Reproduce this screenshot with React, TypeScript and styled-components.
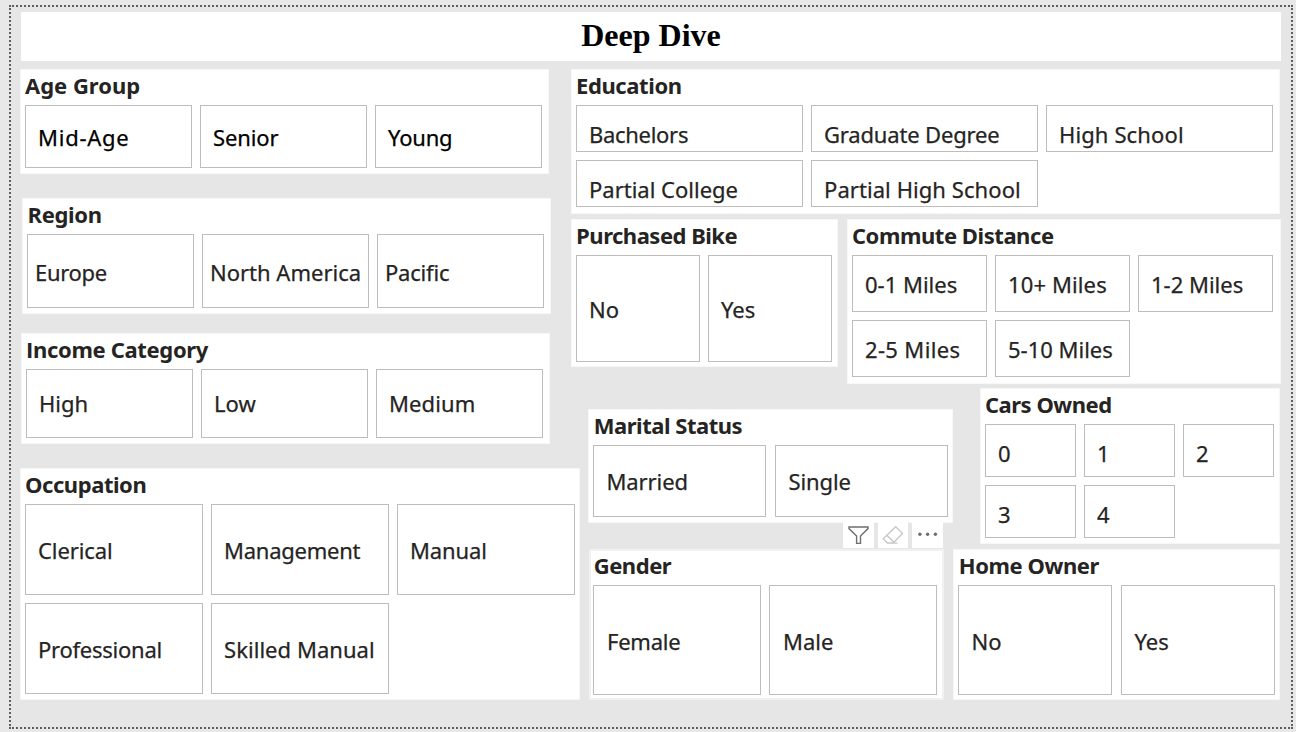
import React from "react";
import styled, { createGlobalStyle } from "styled-components";

const GlobalStyle = createGlobalStyle`
  * { box-sizing: border-box; }
  body { margin: 0; background: #e6e6e6; }
`;

const Workspace = styled.div`
  width: 1296px;
  height: 732px;
  padding: 5px 3px 3px 9px;
  overflow: hidden;
  background: #e8e8e8;
  font-family: "Noto Sans", "Open Sans", sans-serif;
  color: #252423;
`;

const Page = styled.main`
  height: 724px;
  padding: 5px 0 0 8px;
  border: 2px dotted #605e5c;
  background: #e6e6e6;
`;

const Header = styled.header`
  display: flex;
  align-items: center;
  justify-content: center;
  width: 1260px;
  height: 49px;
  margin-left: 2px;
  padding-bottom: 3px;
  background: #fff;
`;

const PageTitle = styled.h1`
  margin: 0;
  font: bold 32px/36px "Liberation Serif", serif;
  color: #000;
`;

const Body = styled.div`
  display: flex;
  margin-top: 8px;
`;

const LeftColumn = styled.div`
  width: 552px;
  flex: none;
`;

const RightColumn = styled.div`
  flex: none;
  width: 710px;
`;

const Row = styled.div<{ $top?: number; $left?: number }>`
  display: flex;
  align-items: flex-start;
  margin: ${(p) => p.$top ?? 0}px 0 0 ${(p) => p.$left ?? 0}px;
`;

const Card = styled.section<{ $w: number; $h: number; $mt: number; $ml: number; $padX: number; $hover?: boolean }>`
  position: relative;
  flex: none;
  width: ${(p) => p.$w}px;
  height: ${(p) => p.$h}px;
  margin: ${(p) => p.$mt}px 0 0 ${(p) => p.$ml}px;
  padding: 0 0 0 ${(p) => p.$padX}px;
  background: #fff;
  box-shadow: inset 0 0 0 ${(p) => (p.$hover ? 2 : 1)}px ${(p) => (p.$hover ? "#f1f1f1" : "#f7f7f7")};
`;

const CardTitle = styled.h2<{ $track: number; $indent: number }>`
  height: 36px;
  margin: 0;
  padding-left: ${(p) => p.$indent}px;
  font-size: 22px;
  line-height: 32px;
  font-weight: 700;
  letter-spacing: ${(p) => p.$track}px;
  white-space: nowrap;

  &::first-letter { font-family: "Open Sans", sans-serif; }
`;

const Tiles = styled.div<{ $tw: number; $th: number; $gap: number; $colGap: number }>`
  display: grid;
  grid-template-columns: repeat(3, ${(p) => p.$tw}px);
  grid-auto-rows: ${(p) => p.$th}px;
  gap: ${(p) => p.$gap}px ${(p) => p.$colGap}px;
`;

const Tile = styled.button<{ $inset: number; $drop: number; $track: number; $dark?: boolean }>`
  display: flex;
  align-items: center;
  padding: ${(p) => Math.max(p.$drop, 0)}px 0 ${(p) => Math.max(-p.$drop, 0)}px ${(p) => p.$inset}px;
  border: 1px solid #bfbdbb;
  background: #fff;
  color: ${(p) => (p.$dark ? "#000" : "#252423")};
  font: 400 22px/30px "Noto Sans", "Open Sans", sans-serif;
  letter-spacing: ${(p) => p.$track}px;
  -webkit-text-stroke: 0.25px currentColor;
  white-space: nowrap;
`;

const VisualActions = styled.div`
  position: absolute;
  right: 1px;
  bottom: 100%;
  display: flex;
  gap: 4px;
  padding-bottom: 1px;
`;

const Action = styled.button<{ $w?: number }>`
  width: ${(p) => p.$w ?? 31}px;
  height: 26px;
  padding: 0;
  border: 0;
  background: #fff;
  overflow: hidden;

  svg { display: block; }
`;

type Item = string | [string, number];

interface SlicerProps {
  title: string;
  titleTrack?: number;
  titleIndent?: number;
  items: Item[];
  w: number;
  h: number;
  mt?: number;
  ml?: number;
  padX?: number;
  tw: number;
  th: number;
  gap?: number;
  colGap?: number;
  inset?: number;
  drop?: number;
  dark?: boolean;
  hover?: boolean;
  children?: React.ReactNode;
}

function Slicer({
  title, titleTrack = 0, titleIndent = 0, items, w, h, mt = 0, ml = 0, padX = 5, tw, th, gap = 8, colGap = 8,
  inset = 12, drop = 1, dark, hover, children,
}: SlicerProps) {
  return (
    <Card $w={w} $h={h} $mt={mt} $ml={ml} $padX={padX} $hover={hover}>
      {children}
      <CardTitle $track={titleTrack} $indent={titleIndent}>{title}</CardTitle>
      <Tiles $tw={tw} $th={th} $gap={gap} $colGap={colGap}>
        {items.map((item) => {
          const [label, track] = typeof item === "string" ? [item, 0] : item;
          return (
            <Tile key={label} $inset={inset} $drop={drop} $track={track} $dark={dark}>
              {label}
            </Tile>
          );
        })}
      </Tiles>
    </Card>
  );
}

function FilterIcon() {
  return (
    <svg width="31" height="26" viewBox="0 0 31 26" fill="none" stroke="#706e6c" strokeWidth="1.4">
      <path d="M6 5H25V6.6L17.5 14V21.4H13.6V14L6 6.6Z" />
    </svg>
  );
}

function EraserIcon() {
  return (
    <svg width="31" height="26" viewBox="0 0 31 26" fill="none" stroke="#c8c6c4" strokeWidth="1.3">
      <path d="M17.7 4.7L24.5 11.5L15.1 21H9.5L5.2 16.8ZM8.8 13.2L15.8 20.2M9.5 21.2H19.5" />
    </svg>
  );
}

function MoreIcon() {
  return (
    <svg width="31" height="26" viewBox="0 0 31 26" fill="#706e6c">
      <circle cx="7.9" cy="12.2" r="1.7" />
      <circle cx="15.6" cy="12.2" r="1.7" />
      <circle cx="23.4" cy="12.2" r="1.7" />
    </svg>
  );
}

export default function App() {
  return (
    <Workspace>
      <GlobalStyle />
      <Page>
        <Header>
          <PageTitle>Deep Dive</PageTitle>
        </Header>
        <Body>
          <LeftColumn>
            <Slicer
              title="Age Group" titleTrack={0}
              items={[["Mid-Age", 0.75], ["Senior", -0.1], ["Young", -0.2]]}
              w={529} h={105} ml={1} tw={167} th={63} dark
            />
            <Slicer
              title="Region" titleTrack={-0.35} titleIndent={0.6}
              items={[["Europe", -0.3], "North America", ["Pacific", -0.2]]}
              w={529} h={116} mt={24} ml={3} tw={167} th={74} inset={7}
            />
            <Slicer
              title="Income Category" titleTrack={-0.33}
              items={["High", "Low", ["Medium", 0.1]]}
              w={529} h={111} mt={19} ml={2} tw={167} th={69} drop={-1}
            />
            <Slicer
              title="Occupation" titleTrack={-0.45}
              items={[["Clerical", -0.1], ["Management", -0.25], ["Manual", -0.1], ["Professional", -0.25], ["Skilled Manual", 0.05]]}
              w={560} h={232} mt={24} ml={1} tw={178} th={91}
            />
          </LeftColumn>
          <RightColumn>
            <Slicer
              title="Education" titleTrack={-0.4}
              items={[["Bachelors", -0.3], ["Graduate Degree", -0.17], ["High School", 0.12], ["Partial College", 0], ["Partial High School", 0.07]]}
              w={709} h={145} tw={227} th={47} drop={11}
            />
            <Row $top={5}>
              <Slicer title="Purchased Bike" titleTrack={-0.5} items={["No", "Yes"]} w={267} h={148} tw={124} th={107} />
              <Slicer
                title="Commute Distance" titleTrack={-0.44}
                items={["0-1 Miles", ["10+ Miles", 0.12], "1-2 Miles", ["2-5 Miles", 0.35], "5-10 Miles"]}
                w={434} h={165} ml={9} tw={135} th={57}
              />
            </Row>
            <Row $top={4} $left={17}>
              <Slicer
                title="Marital Status" titleTrack={-0.48} titleIndent={0.8} items={[["Married", -0.1], ["Single", -0.1]]}
                w={365} h={114} mt={21} tw={173} th={72} colGap={9} inset={12.5} drop={0}
              />
              <Slicer title="Cars Owned" titleTrack={-0.48} items={["0", "1", "2", "3", "4"]} w={300} h={156} ml={27} tw={91} th={53} drop={4} />
            </Row>
            <Row $top={5} $left={18}>
              <Slicer title="Gender" titleTrack={-0.45} titleIndent={0.7} items={[["Female", -0.25], ["Male", 0]]} w={355} h={151} padX={4} tw={168} th={110} inset={13} hover>
                <VisualActions>
                  <Action><FilterIcon /></Action>
                  <Action $w={30}><EraserIcon /></Action>
                  <Action><MoreIcon /></Action>
                </VisualActions>
              </Slicer>
              <Slicer title="Home Owner" titleTrack={-0.42} titleIndent={0.8} items={["No", "Yes"]} w={327} h={151} ml={9} tw={154} th={110} colGap={9} inset={12.5} />
            </Row>
          </RightColumn>
        </Body>
      </Page>
    </Workspace>
  );
}
